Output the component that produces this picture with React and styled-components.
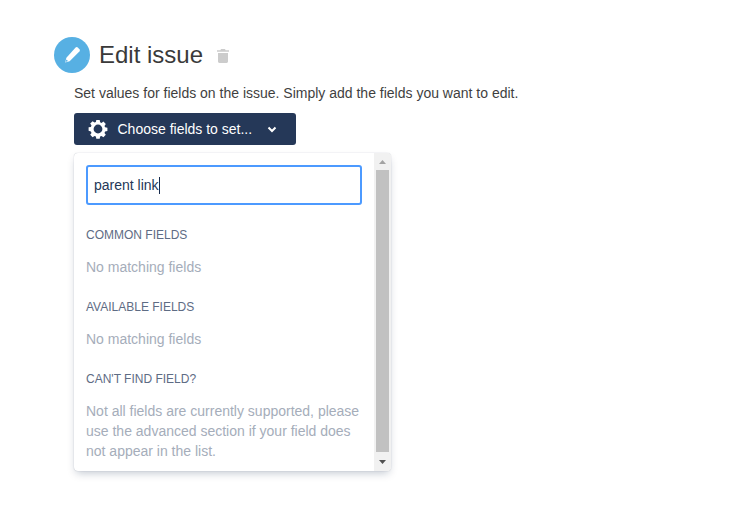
import React from "react";
import styled, { createGlobalStyle } from "styled-components";

const Global = createGlobalStyle`
  html, body { margin: 0; padding: 0; background: #fff; }
  body { font-family: "Liberation Sans", Arial, sans-serif; }
`;
const Page = styled.div`
  width: 743px; height: 528px; box-sizing: border-box; padding: 37px 0 0 54px; overflow: hidden;
`;
const Header = styled.div`display: flex; align-items: center; height: 36px;`;
const Badge = styled.div`
  width: 36px; height: 36px; border-radius: 50%; background: #57b0e3;
  display: flex; align-items: center; justify-content: center;
`;
const Title = styled.h1`
  margin: 0 0 0 9px; font-size: 24px; font-weight: 400; color: #3a3a3a; line-height: 36px;
`;
const Trash = styled.svg`margin-left: 14px; margin-top: 2px; display: block;`;
const Body = styled.div`padding-left: 20px; width: 317px;`;
const Description = styled.p`
  margin: 10px 0 0; font-size: 14px; line-height: 20px; color: #3f3f3f; white-space: nowrap;
`;
const ChooseButton = styled.button`
  margin-top: 10px; width: 222px; height: 32px; border: 0; border-radius: 3px; background: #253858; color: #fff;
  display: flex; align-items: center; padding: 0 0 0 14px; font: 14px "Liberation Sans", Arial, sans-serif;
`;
const ButtonLabel = styled.span`margin-left: 9.5px;`;
const Chevron = styled.svg`margin-left: 13.5px;`;
const Panel = styled.div`
  margin-top: 8px; width: 317px; height: 318px; background: #fff; border-radius: 4px; display: flex; overflow: hidden;
  box-shadow: 0 4px 8px -2px rgba(9,30,66,.25), 0 0 1px rgba(9,30,66,.31);
`;
const Content = styled.div`flex: 1; padding: 12px 12px 0;`;
const SearchBox = styled.div`
  width: 276px; height: 40px; box-sizing: border-box; border: 2px solid #4c9aff; border-radius: 3px;
  padding-left: 6px; display: flex; align-items: center; font-size: 14px; color: #253858;
`;
const Caret = styled.span`display: inline-block; width: 1px; height: 17px; background: #172b4d;`;
const SectionTitle = styled.h2`
  margin: 22px 0 0; font-size: 12px; font-weight: 400; line-height: 16px; color: #5e6c84; text-transform: uppercase;
`;
const Muted = styled.p`
  margin: 14px 0 0; font-size: 14px; line-height: 20px; color: #a5adba;
`;
const Scrollbar = styled.div`
  width: 17px; background: #f1f1f1; display: flex; flex-direction: column; align-items: center;
`;
const ScrollArrow = styled.div`
  height: ${(p) => p.$size}px; width: 17px; display: flex; align-items: center; justify-content: center;
`;
const Thumb = styled.div`flex: 1; width: 13px; background: #c1c1c1;`;

export default function App() {
  return (
    <Page>
      <Global />
      <Header>
        <Badge>
          <svg width="20" height="20" viewBox="0 0 20 20">
            <path d="M13.6 2.6a1.6 1.6 0 0 1 2.2 0l1.6 1.6a1.6 1.6 0 0 1 0 2.2L7.6 16.2 3.2 17.4l1.2-4.6z" fill="#fff" />
            <path d="M4.4 14.6l1.6 1.5-2.4.9z" fill="#57b0e3" />
          </svg>
        </Badge>
        <Title>Edit issue</Title>
        <Trash width="12" height="14" viewBox="0 0 12 14">
          <path d="M4 0h4l.6 1.2H12v1.6H0V1.2h3.4zM1 4h10v8.6c0 .8-.6 1.4-1.4 1.4H2.4C1.6 14 1 13.4 1 12.6z" fill="#ccc" />
        </Trash>
      </Header>
      <Body>
        <Description>Set values for fields on the issue. Simply add the fields you want to edit.</Description>
        <ChooseButton>
          <svg width="20" height="20" viewBox="0 0 20 20">
            <path fillRule="evenodd" fill="#fff" d="M8.3 1h3.4l.4 2.3 1.4.6 1.9-1.3 2.4 2.4-1.3 1.9.6 1.4 2.3.4v3.4l-2.3.4-.6 1.4 1.3 1.9-2.4 2.4-1.9-1.3-1.4.6-.4 2.3H8.3l-.4-2.3-1.4-.6-1.9 1.3-2.4-2.4 1.3-1.9-.6-1.4L.6 11.7V8.3l2.3-.4.6-1.4-1.3-1.9 2.4-2.4 1.9 1.3 1.4-.6zM10 5.6a4.4 4.4 0 1 0 0 8.8 4.4 4.4 0 0 0 0-8.8z" />
          </svg>
          <ButtonLabel>Choose fields to set...</ButtonLabel>
          <Chevron width="12" height="12" viewBox="0 0 12 12">
            <path d="M2.5 4.5 6 8l3.5-3.5" fill="none" stroke="#fff" strokeWidth="2" />
          </Chevron>
        </ChooseButton>
        <Panel>
          <Content>
            <SearchBox>parent link<Caret /></SearchBox>
            <SectionTitle>Common fields</SectionTitle>
            <Muted>No matching fields</Muted>
            <SectionTitle>Available fields</SectionTitle>
            <Muted>No matching fields</Muted>
            <SectionTitle>Can't find field?</SectionTitle>
            <Muted>Not all fields are currently supported, please use the advanced section if your field does not appear in the list.</Muted>
          </Content>
          <Scrollbar>
            <ScrollArrow $size={17}>
              <svg width="7" height="4" viewBox="0 0 7 4"><path d="M3.5 0 7 4H0z" fill="#a3a3a3" /></svg>
            </ScrollArrow>
            <Thumb />
            <ScrollArrow $size={19}>
              <svg width="7" height="4" viewBox="0 0 7 4"><path d="M0 0h7L3.5 4z" fill="#505050" /></svg>
            </ScrollArrow>
          </Scrollbar>
        </Panel>
      </Body>
    </Page>
  );
}
